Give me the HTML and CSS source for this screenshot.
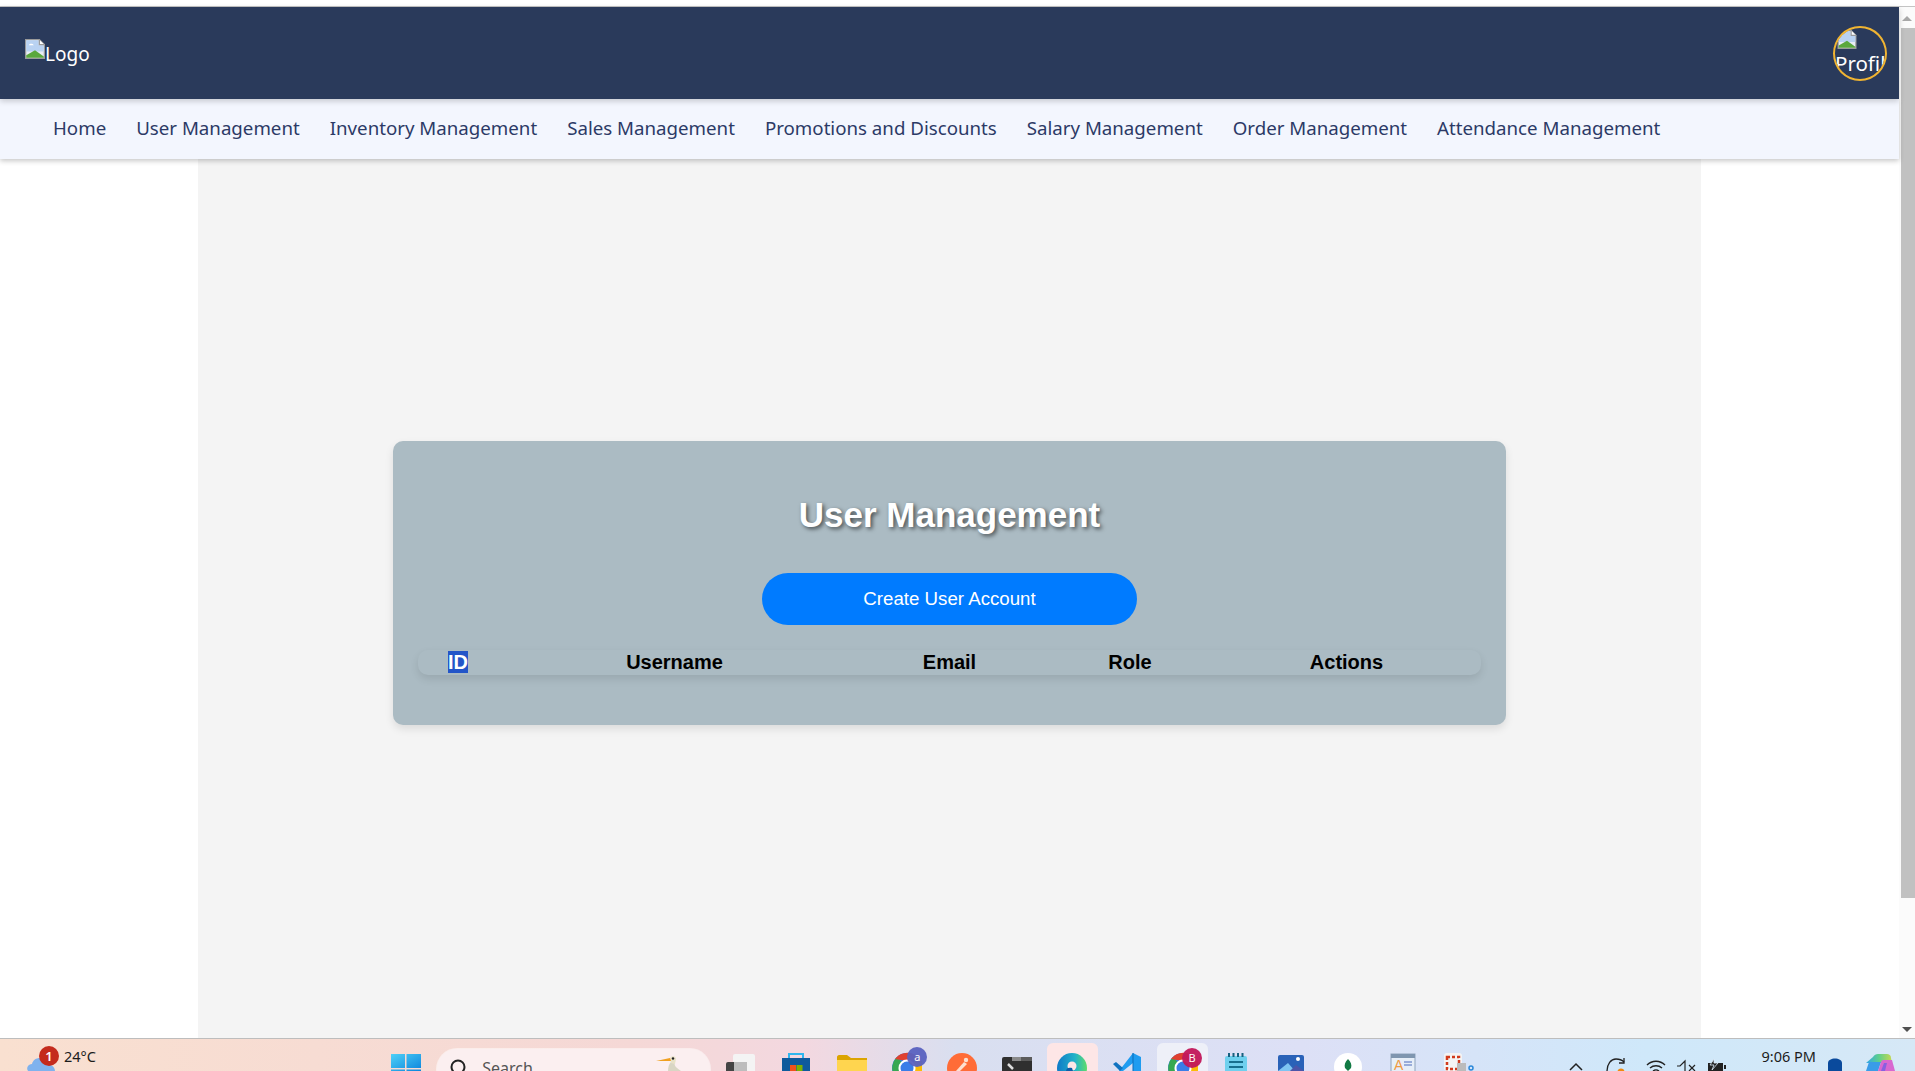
FILE: index.html
```html
<!DOCTYPE html>
<html lang="en">
<head>
  <meta charset="UTF-8" />
  <title>User Management</title>
  <link rel="stylesheet" href="styles.css">
</head>
<body>

<div class="top-strip"></div>

<div class="window">
  <div class="page">
    <header class="topbar">
      <div class="logo">
        <svg class="broken" viewBox="0 0 16 16"><path d="M.5.5h11l4 4v11H.5z" fill="#e8edf5" stroke="#9a9a9a"/><path d="M1 1h10v4h4v5H1z" fill="#b9d2f2"/><path d="M3 5c1-1.500 3-1.500 4 0z" fill="#fff"/><path d="M1 15v-2l7-4 7 5v1z" fill="#5aa83c"/><path d="M11.500.5v4h4" fill="#fff" stroke="#9a9a9a"/></svg><span>Logo</span>
      </div>
      <div class="profile">
        <svg class="broken" viewBox="0 0 16 16"><path d="M.5.5h11l4 4v11H.5z" fill="#e8edf5" stroke="#9a9a9a"/><path d="M1 1h10v4h4v5H1z" fill="#b9d2f2"/><path d="M1 15v-2l7-4 7 5v1z" fill="#5aa83c"/><path d="M11.500.5v4h4" fill="#fff" stroke="#9a9a9a"/></svg><span>Profile</span>
      </div>
    </header>

    <nav class="menu">
      <a>Home</a>
      <a>User Management</a>
      <a>Inventory Management</a>
      <a>Sales Management</a>
      <a>Promotions and Discounts</a>
      <a>Salary Management</a>
      <a>Order Management</a>
      <a>Attendance Management</a>
    </nav>

    <main class="content">
      <section class="card">
        <h2>User Management</h2>
        <button class="create-btn">Create User Account</button>
        <table class="user-table">
          <colgroup>
            <col class="col-id"><col class="col-name"><col class="col-email"><col class="col-role"><col class="col-actions">
          </colgroup>
          <thead>
            <tr>
              <th><span class="selected">ID</span></th>
              <th>Username</th>
              <th>Email</th>
              <th>Role</th>
              <th>Actions</th>
            </tr>
          </thead>
        </table>
      </section>
    </main>
  </div>

  <div class="scrollbar">
    <div class="arrow-up"></div>
    <div class="thumb"></div>
    <div class="arrow-down"></div>
  </div>
</div>

<footer class="taskbar">
  <div class="weather">
    <div class="cloud">
      <svg width="30" height="20" viewBox="0 0 30 20"><path d="M3 20c-2-3 0-7 4-7 1-4 4-6 8-6 5 0 7 3 7 6 4 0 8 3 8 7z" fill="#7fb2ee"/></svg>
      <span class="badge">1</span>
    </div>
    <span class="temp">24°C</span>
  </div>

  <div class="app">
    <svg width="30" height="20" viewBox="0 0 30 20"><defs><linearGradient id="win" x1="0" y1="0" x2="1" y2="1"><stop offset="0" stop-color="#4fd0f7"/><stop offset="1" stop-color="#0b84dc"/></linearGradient></defs><path d="M0 3h14v14H0zM15.500 3H30v14H15.500zM0 18.500h14V20H0zM15.500 18.500H30V20H15.500z" fill="url(#win)"/></svg>
  </div>

  <div class="search">
    <svg class="search-icon" width="20" height="20" viewBox="0 0 20 20"><circle cx="8" cy="8" r="6.500" fill="none" stroke="#222" stroke-width="2"/><path d="M13 13l5 5" stroke="#222" stroke-width="2"/></svg>
    <span class="search-text">Search</span>
    <svg class="bird" width="26" height="16" viewBox="0 0 26 16"><path d="M12 16c0-4 1-7 3-9l4 1c-1 2 0 4 6 8z" fill="#d9d6c4"/><path d="M14 3c2-3 6-2 6 1l-1 5-4-1z" fill="#e8e2c8"/><path d="M0 6l14-3 1 3z" fill="#f0a020"/><circle cx="17" cy="3.500" r="1.200" fill="#222"/></svg>
  </div>

  <div class="app">
    <svg width="30" height="20" viewBox="0 0 30 20"><rect x="7" y="3" width="22" height="22" rx="2" fill="#f4f4f4"/><rect x="0" y="11" width="20" height="12" rx="2" fill="#444"/><rect x="8" y="11" width="13" height="12" fill="#bdbdbd"/></svg>
  </div>
  <div class="app">
    <svg width="30" height="20" viewBox="0 0 30 20"><path d="M8 8V3h14v5" fill="none" stroke="#2fb6ee" stroke-width="2"/><path d="M1 7h28v13H1z" fill="#0f5a9c"/><rect x="9" y="14" width="6" height="6" fill="#f1511b"/><rect x="15.500" y="14" width="6" height="6" fill="#80b000"/></svg>
  </div>
  <div class="app">
    <svg width="30" height="20" viewBox="0 0 30 20"><path d="M0 6c0-1 1-2 2-2h8l4 3h16v13H0z" fill="#dca400"/><path d="M0 9h30v11H0z" fill="#ffd54f"/></svg>
  </div>
  <div class="app">
    <svg width="30" height="20" viewBox="0 0 30 20"><circle cx="15" cy="17" r="15" fill="#3a7de8"/><path d="M15 17L2 24A15 15 0 0 1 5 6z" fill="#36a852"/><path d="M3 8A15 15 0 0 1 28 9L15 10z" fill="#e0402f"/><path d="M22 10h8v10h-8z" fill="#fbbc05"/><circle cx="15" cy="17" r="8.500" fill="#fff"/><circle cx="15" cy="17" r="6.500" fill="#3a7de8"/></svg>
    <span class="app-badge badge-blue">a</span>
  </div>
  <div class="app">
    <svg width="30" height="20" viewBox="0 0 30 20"><circle cx="15" cy="17" r="15" fill="#ff6c37"/><path d="M9 20l8-9 3 2-7 7z" fill="#fde0d0"/><circle cx="19" cy="9" r="2.200" fill="#fde0d0"/></svg>
  </div>
  <div class="app">
    <svg width="30" height="20" viewBox="0 0 30 20"><rect x="0" y="6" width="30" height="20" rx="2" fill="#2f2f2f"/><rect x="10" y="6" width="9" height="4" fill="#8a8a8a"/><rect x="19" y="6" width="11" height="4" fill="#5c5c5c"/><path d="M6 13l5 5" stroke="#ddd" stroke-width="2.500"/></svg>
  </div>
  <div class="app tile tile-pink">
    <svg width="30" height="20" viewBox="0 0 30 20"><defs><linearGradient id="edge" x1="0" y1="0" x2="1" y2="0"><stop offset="0" stop-color="#0f7ac8"/><stop offset=".6" stop-color="#22b3c8"/><stop offset="1" stop-color="#5fdc6a"/></linearGradient></defs><circle cx="15" cy="17" r="15" fill="url(#edge)"/><circle cx="15" cy="15" r="4.500" fill="#fde6e6"/><path d="M9 20c0-3 3-4 6-3l1 3z" fill="#0d5da8"/></svg>
  </div>
  <div class="app">
    <svg width="30" height="20" viewBox="0 0 30 20"><path d="M20 2l8 4v14h-8V12l-10 8H6z" fill="#1f9cf0"/><path d="M0 13l3-2 7 6-3 3z" fill="#0f72c0"/><path d="M20 2v18" stroke="#0b6bb8" stroke-width="1"/></svg>
  </div>
  <div class="app tile tile-pale">
    <svg width="30" height="20" viewBox="0 0 30 20"><circle cx="15" cy="17" r="15" fill="#3a7de8"/><path d="M15 17L2 24A15 15 0 0 1 5 6z" fill="#36a852"/><path d="M3 8A15 15 0 0 1 28 9L15 10z" fill="#e0402f"/><path d="M22 10h8v10h-8z" fill="#fbbc05"/><circle cx="15" cy="17" r="8.500" fill="#fff"/><circle cx="15" cy="17" r="6.500" fill="#3a7de8"/></svg>
    <span class="app-badge badge-red">B</span>
  </div>
  <div class="app">
    <svg width="30" height="20" viewBox="0 0 30 20"><rect x="2" y="5" width="22" height="18" rx="2" fill="#6fd0ee"/><path d="M6 2v4M10.500 2v4M15 2v4M19.500 2v4" stroke="#17607f" stroke-width="2"/><path d="M6 11h14M6 16h14" stroke="#17708f" stroke-width="2"/></svg>
  </div>
  <div class="app">
    <svg width="30" height="20" viewBox="0 0 30 20"><rect x="0" y="4" width="26" height="22" rx="2" fill="#2a62b8"/><path d="M0 20l10-8 7 8z" fill="#7ec4f2"/><path d="M12 20l6-6 8 6z" fill="#4c55a8"/><circle cx="20" cy="8" r="2" fill="#fff"/></svg>
  </div>
  <div class="app">
    <svg width="30" height="20" viewBox="0 0 30 20"><circle cx="15" cy="16" r="14" fill="#fff"/><path d="M15 8c3 3 4 6 3 9l-3 3-3-3c-1-3 0-6 3-9z" fill="#127a44"/></svg>
  </div>
  <div class="app">
    <svg width="30" height="20" viewBox="0 0 30 20"><rect x="2" y="3" width="24" height="20" fill="#e6eef8" stroke="#8fa4bc"/><rect x="2" y="3" width="24" height="4" fill="#7f96b0"/><text x="5" y="19" class="wordpad-a">A</text><path d="M15 11h8M15 14h8" stroke="#7f96d0" stroke-width="1.500"/></svg>
  </div>
  <div class="app">
    <svg width="32" height="20" viewBox="0 0 32 20"><rect x="1" y="2" width="18" height="18" rx="3" fill="#f4f4f4"/><rect x="4" y="6" width="12" height="12" fill="none" stroke="#d13a1c" stroke-width="2.500" stroke-dasharray="3 2"/><rect x="14" y="12" width="9" height="8" fill="#bbb"/><circle cx="28" cy="17" r="2" fill="none" stroke="#2b88d8" stroke-width="1.500"/></svg>
  </div>

  <div class="tray">
    <svg class="caret" width="14" height="20" viewBox="0 0 14 20"><path d="M1 19l6-6 6 6" fill="none" stroke="#222" stroke-width="1.500"/></svg>
    <svg class="refresh" width="20" height="20" viewBox="0 0 20 20"><path d="M1 20C1 13 5 8 10 8c3 0 6 1 8 3" fill="none" stroke="#222" stroke-width="1.300"/><path d="M18 7v5h-5" fill="none" stroke="#222" stroke-width="1.300"/><circle cx="15" cy="21" r="3.500" fill="#f08a10"/></svg>
    <svg class="wifi" width="20" height="20" viewBox="0 0 20 20"><path d="M1 14c5-5 13-5 18 0M4 17c3.500-3 8.500-3 12 0M7 20c2-1.500 4-1.500 6 0" fill="none" stroke="#222" stroke-width="1.400"/></svg>
    <svg class="speaker" width="20" height="20" viewBox="0 0 20 20"><path d="M1 15h3l5-5v10" fill="none" stroke="#222" stroke-width="1.200"/><path d="M13 14l6 6M19 14l-6 6" stroke="#222" stroke-width="1.200"/></svg>
    <svg class="battery" width="20" height="20" viewBox="0 0 20 20"><path d="M2 12h15v8H2z" fill="#222"/><path d="M18 14h2v4h-2z" fill="#222"/><path d="M8 8l-4 6h4l-2 5 6-7H8z" fill="#222" stroke="#e0eefa" stroke-width=".8"/></svg>
    <span class="clock">9:06 PM</span>
    <svg class="person" width="14" height="20" viewBox="0 0 14 20"><path d="M0 20v-8c0-6 14-6 14 0v8z" fill="#0a4a9c"/></svg>
    <svg class="copilot" width="29" height="20" viewBox="0 0 29 20"><defs><linearGradient id="cop" x1="0" y1="0" x2="1" y2="0"><stop offset="0" stop-color="#2fa8e8"/><stop offset=".5" stop-color="#5fd08a"/><stop offset="1" stop-color="#c8d850"/></linearGradient></defs><path d="M7 6c1-2 3-3 5-3h9c2 0 4 1 4 4l1 5H0z" fill="url(#cop)"/><path d="M0 20l3-9h12l-3 9z" fill="#3a9ce8"/><path d="M12 20l3-9c.5-1.500 1.500-2 3-2h8l3 11z" fill="#d868d0"/><path d="M15 20l3-8h3l-2 8z" fill="#8860e0"/></svg>
  </div>
</footer>

</body>
</html>
```

FILE: styles.css
```css
html, body {
  height: 100%;
}

body {
  margin: 0;
  height: 1071px;
  display: flex;
  flex-direction: column;
  overflow: hidden;
  font-family: "Liberation Sans", Arial, sans-serif;
  background: #fff;
}

.top-strip {
  height: 6px;
  background: #fff;
  border-bottom: 1px solid #c4c4c4;
  flex: none;
}

.window {
  flex: 1;
  display: flex;
  min-height: 0;
}

.page {
  flex: 1;
  display: flex;
  flex-direction: column;
  min-width: 0;
}

.topbar {
  height: 92px;
  flex: none;
  background: #2a3a5b;
  display: flex;
  align-items: center;
  justify-content: space-between;
  padding: 0 12px 0 25px;
  position: relative;
  z-index: 2;
  box-shadow: 0 2px 6px rgba(0, 0, 0, 0.2);
  font-family: "Noto Sans", sans-serif;
  color: #fff;
  font-size: 20px;
}

.broken {
  width: 20px;
  height: 20px;
  flex: none;
}

.logo {
  display: flex;
  align-items: flex-start;
  height: 30px;
  margin-top: 2px;
}

.logo span {
  margin-top: 2px;
  line-height: 27px;
  font-size: 19px;
}

.profile {
  width: 50px;
  height: 49px;
  border: 2px solid #f0b432;
  border-radius: 50%;
  overflow: hidden;
  padding-top: 2px;
  line-height: 29px;
  white-space: nowrap;
  font-size: 20.5px;
}

.profile .broken {
  display: block;
  height: 19px;
  margin-left: 2px;
}

.menu {
  height: 60px;
  flex: none;
  box-sizing: border-box;
  padding-bottom: 4px;
  background: #f3f6fe;
  display: flex;
  align-items: center;
  gap: 30px;
  padding-left: 53px;
  box-shadow: 0 2px 5px rgba(0, 0, 0, 0.22);
  position: relative;
  z-index: 1;
  font-family: "Noto Sans", sans-serif;
  font-size: 18.7px;
  color: #2c3a66;
}

.content {
  flex: 1;
  width: 1503px;
  margin: 0 auto;
  background: #f4f4f4;
  padding-top: 282px;
  box-sizing: border-box;
  min-height: 0;
}

.card {
  width: 1113px;
  box-sizing: border-box;
  margin: 0 auto;
  padding: 25px 25px 50px;
  background: #abbbc3;
  border-radius: 10px;
  box-shadow: 0 4px 8px rgba(0, 0, 0, 0.1);
  text-align: center;
}

.card h2 {
  margin: 30px 0 40px;
  font-size: 35px;
  line-height: 37px;
  font-weight: bold;
  color: #fff;
  text-shadow: 2px 2px 4px rgba(0, 0, 0, 0.6);
}

.create-btn {
  display: block;
  width: 375px;
  height: 52px;
  margin: 0 auto 25px;
  border: none;
  border-radius: 26px;
  background: #007bff;
  color: #fff;
  font-family: inherit;
  font-size: 18.7px;
}

.user-table {
  width: 100%;
  table-layout: fixed;
  border-collapse: separate;
  border-spacing: 0;
  border-radius: 10px;
  box-shadow: 0 4px 8px rgba(0, 0, 0, 0.1);
  color: #000;
}

.user-table th {
  height: 25px;
  padding: 0;
  font-size: 20px;
  font-weight: bold;
  text-align: center;
}

.col-id { width: 80px; }
.col-name { width: 353px; }
.col-email { width: 197px; }
.col-role { width: 164px; }
.col-actions { width: 269px; }

.selected {
  background: #2355c8;
  color: #fff;
}

.scrollbar {
  width: 14px;
  padding-left: 2px;
  flex: none;
  background: #fbfbfb;
  position: relative;
}

.thumb {
  margin-top: 21px;
  height: 870px;
  background: #c1c1c1;
}

.arrow-up,
.arrow-down {
  position: absolute;
  left: 3px;
  width: 0;
  height: 0;
  border-left: 5px solid transparent;
  border-right: 5px solid transparent;
}

.arrow-up {
  top: 9px;
  border-bottom: 5px solid #a8a8a8;
}

.arrow-down {
  bottom: 6px;
  border-top: 5px solid #505050;
}

.taskbar {
  height: 33px;
  flex: none;
  box-sizing: border-box;
  border-top: 1px solid #bdbdbd;
  display: flex;
  overflow: hidden;
  background: linear-gradient(90deg, #f9e0d0 0%, #f5d8d6 33%, #f3d8e0 42%, #d9dff0 50%, #dde0f6 68%, #cfe8fa 86%, #d6e8f6 100%);
  font-family: "Noto Sans", sans-serif;
  font-size: 14.5px;
  color: #1c1c1c;
}

.weather {
  width: 378.5px;
  flex: none;
  display: flex;
  padding-left: 25px;
  box-sizing: border-box;
}

.cloud {
  position: relative;
  padding-top: 12px;
  height: 32px;
}

.badge {
  position: absolute;
  left: 14px;
  top: 7px;
  width: 20px;
  height: 20px;
  border-radius: 50%;
  background: #c42b1c;
  color: #fff;
  font-size: 13px;
  font-weight: 600;
  line-height: 20px;
  text-align: center;
}

.temp {
  margin-left: 9px;
  padding-top: 9px;
  line-height: 17px;
}

.app {
  width: 55.2px;
  flex: none;
  display: flex;
  justify-content: center;
  align-items: flex-start;
  padding-top: 12px;
  box-sizing: border-box;
  position: relative;
}

.tile {
  margin: 4px 2px 0;
  width: 51.2px;
  padding-top: 8px;
  border-radius: 6px 6px 0 0;
}

.tile-pink { background: #fde6e6; }
.tile-pale { background: #eef0f8; }

.app-badge {
  position: absolute;
  top: 8px;
  left: 28px;
  width: 20px;
  height: 20px;
  border-radius: 50%;
  color: #fff;
  opacity: 0.95;
  font-size: 11px;
  line-height: 20px;
  text-align: center;
}

.tile .app-badge {
  top: 5px;
  left: 25px;
}

.badge-blue { background: #5a62c0; }
.badge-red { background: #c2185b; }

.search {
  width: 273px;
  height: 40px;
  flex: none;
  margin: 10px 3.5px 0;
  box-sizing: border-box;
  padding-left: 13px;
  display: flex;
  align-items: flex-start;
  border-radius: 20px;
  background: #fbeff0;
  box-shadow: 0 0 0 1px rgba(255, 255, 255, 0.5);
  position: relative;
}

.search-icon {
  margin-top: 10px;
}

.search-text {
  margin-left: 12px;
  padding-top: 9px;
  font-size: 16px;
  line-height: 20px;
  color: #555;
}

.bird {
  margin-left: auto;
  margin-right: 28px;
  margin-top: 6px;
}

.wordpad-a {
  font-family: "Liberation Sans", sans-serif;
  font-size: 14px;
  fill: #f09a40;
}

.tray {
  margin-left: auto;
  padding-right: 20px;
  display: flex;
  align-items: flex-start;
  padding-top: 12px;
}

.refresh { margin-left: 23px; }
.wifi { margin-left: 20px; }
.speaker { margin-left: 10px; }
.battery { margin-left: 10px; }
.person { margin-left: 12px; }
.copilot { margin-left: 24px; }

.clock {
  margin-left: 36px;
  margin-top: -3px;
  line-height: 17px;
  white-space: nowrap;
}
```
